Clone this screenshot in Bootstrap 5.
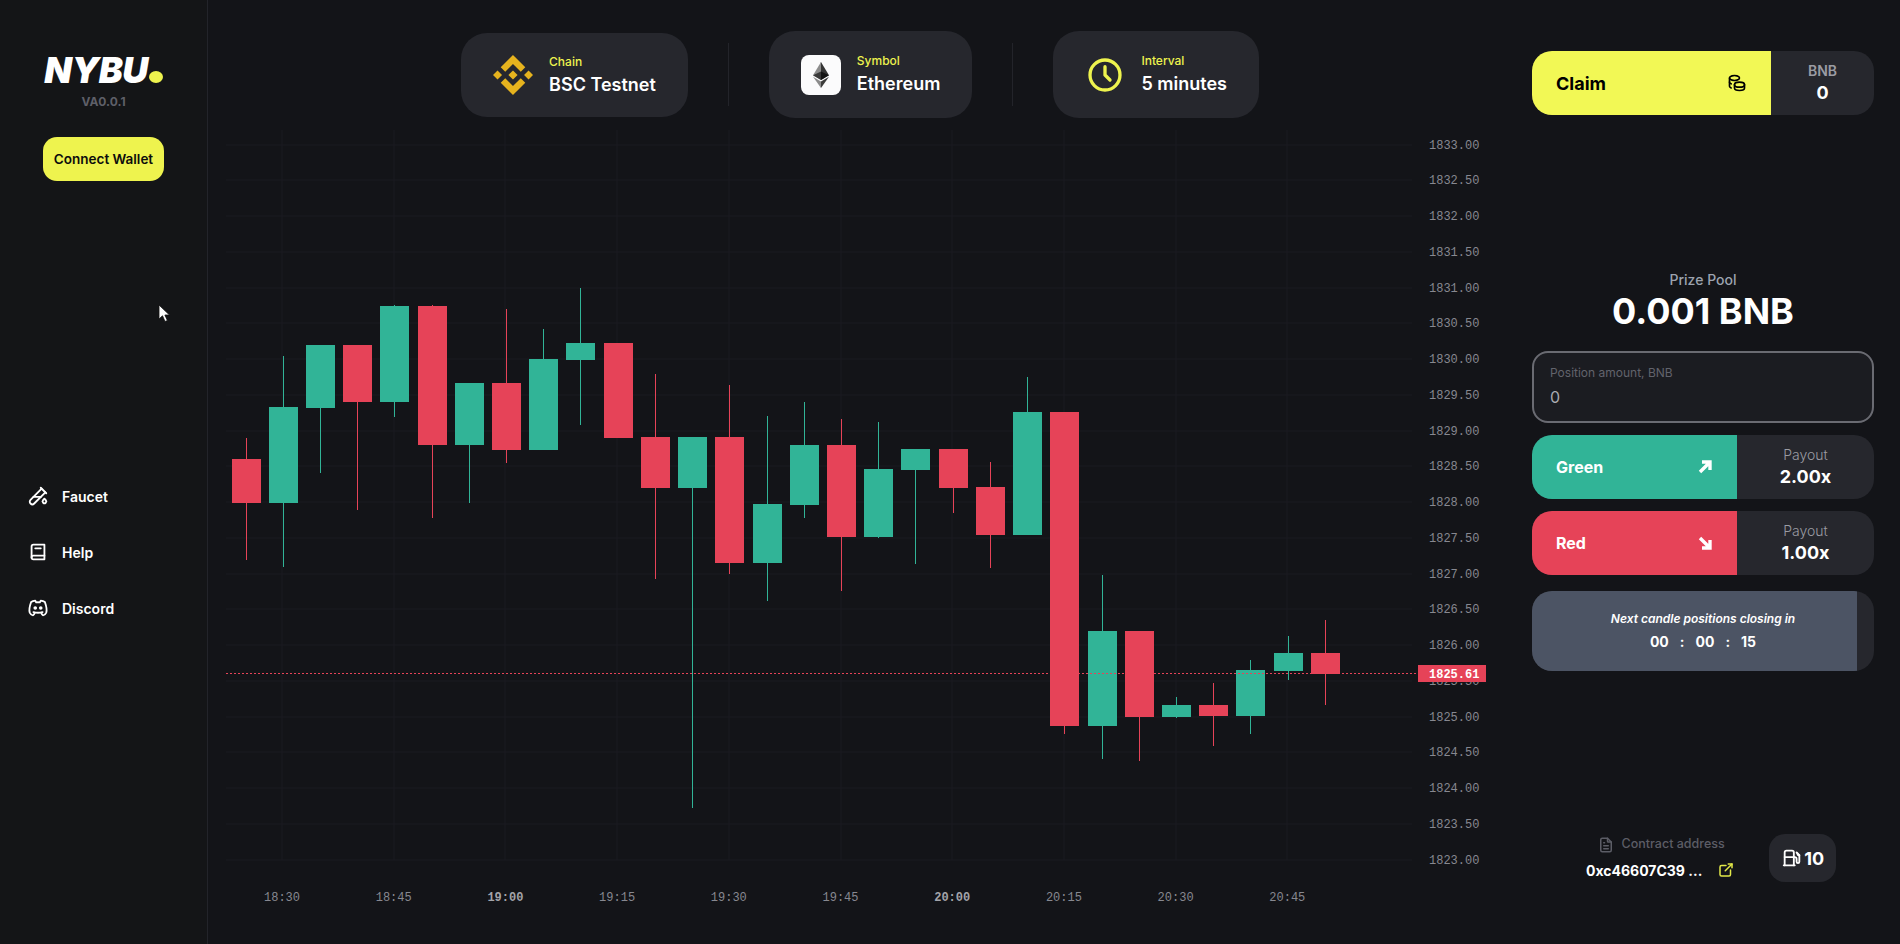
<!DOCTYPE html>
<html lang="en">
<head>
  <meta charset="UTF-8" />
  <meta name="viewport" content="width=device-width, initial-scale=1" />
  <title>NYBU</title>
  <link href="https://cdn.jsdelivr.net/npm/bootstrap@5.3.3/dist/css/bootstrap.min.css" rel="stylesheet" />
  <style>
    html, body { height: 100%; }
    body { background: #131418; color: #fff; font-family: Inter, "Liberation Sans", sans-serif; overflow: hidden; }
    .app-shell { height: 944px; }
    .side-col { width: 208px; border-right: 1px solid #23242a; background: #141517; }
    .logo-wrap { margin-top: 52px; line-height: 1; }
    .logo-text { font-size: 36px; font-weight: 900; font-style: italic; letter-spacing: -.5px; }
    .logo-dot { width: 14px; height: 12px; border-radius: 50%; background: #eef34e; margin-left: 1px; margin-bottom: 5px; }
    .logo-ver { font-size: 12px; font-weight: 700; color: #5e5f68; margin-top: 8px; }
    .connect-btn { width: 121px; height: 44px; margin-top: 29px; border-radius: 14px; background: #eef34e; color: #0c0c0c; font-size: 13.5px; font-weight: 600; border: 0; padding: 0; }
    .side-menu { margin-top: 304px; padding-left: 27px; gap: 34px; }
    .side-link { font-size: 14px; font-weight: 600; color: #fff; text-decoration: none; gap: 13px; height: 22px; }
    .side-link svg { width: 22px; height: 22px; }
    .main-col { width: 1304px; }
    .top-bar { height: 130px; padding-top: 31px; gap: 40px; }
    .info-pill { background: #26272d; border-radius: 26px; padding: 0 32px; height: 87px; gap: 16px; }
    .pill-short { height: 84px; margin-top: 2px; }
    .pill-rule { width: 1px; height: 63px; margin-top: 12px; background: #23242a; }
    .pill-label { font-size: 12px; font-weight: 500; color: #eef34e; line-height: 18px; }
    .pill-value { font-size: 18px; font-weight: 600; color: #fff; line-height: 27px; }
    .icon-box { width: 40px; height: 40px; }
    .eth-box { background: #fbfbfc; border-radius: 8px; }
    .chart-svg { display: block; width: 1304px; height: 814px; }
    .chart-svg text { font-family: "Liberation Mono", monospace; font-size: 12px; fill: #878890; }
    .chart-svg text.axis-bold { font-weight: 700; fill: #a3a4aa; }
    .chart-svg text.live-price { fill: #fff; font-weight: 700; }
    .right-col { width: 388px; padding: 51px 26px 0 20px; }
    .split-box { height: 64px; border-radius: 20px; background: #26272d; overflow: hidden; }
    .split-main { padding: 0 24px; font-weight: 700; }
    .claim-main { width: 239px; background: #f2f855; color: #000; font-size: 18px; }
    .claim-main svg { width: 20px; height: 20px; }
    .up-main { width: 205px; background: #31b497; color: #fff; font-size: 16px; }
    .down-main { width: 205px; background: #e64358; color: #fff; font-size: 16px; }
    .arrow-ico { width: 16px; height: 16px; margin-right: 0; }
    .split-side-label { font-size: 14px; line-height: 20px; }
    .split-side-value { font-size: 18px; font-weight: 700; line-height: 24px; }
    .pool-wrap { margin-top: 155px; }
    .pool-label { font-size: 14px; font-weight: 500; color: #9ca3af; line-height: 20px; }
    .pool-value { font-size: 36px; font-weight: 700; line-height: 40px; margin-top: 1px; }
    .amount-box { height: 72px; margin-top: 20px; margin-bottom: 12px; border: 2px solid #6a6b72; border-radius: 16px; background: #1b1c21; padding: 12px 16px; }
    .amount-label { font-size: 12px; color: #62636c; line-height: 16px; }
    .amount-input { background: transparent; border: 0; outline: 0; padding: 0; width: 100%; color: #a9aab0; font-size: 16px; line-height: 24px; margin-top: 4px; font-family: inherit; }
    .timer-box { height: 80px; border-radius: 20px; background: #26272d; overflow: hidden; margin-top: 16px; position: relative; }
    .timer-fill { position: absolute; top: 0; bottom: 0; left: 0; background: #4c5464; }
    .timer-text { position: relative; }
    .timer-title { font-size: 12px; font-weight: 600; font-style: italic; line-height: 18px; }
    .timer-digits { font-size: 14px; font-weight: 700; gap: 11px; line-height: 22px; margin-top: 3px; }
    .foot-row { margin-top: 163px; padding-left: 54px; }
    .addr-label { font-size: 12.5px; font-weight: 500; color: #5c5d66; gap: 7px; }
    .addr-label svg { width: 18px; height: 18px; }
    .addr-value { font-size: 14px; font-weight: 700; margin-top: 6px; gap: 15px; }
    .addr-value svg { width: 18px; height: 18px; color: #e3e948; }
    .gas-box { width: 67px; height: 48px; margin-left: 34px; border-radius: 16px; background: #26272d; font-size: 18px; font-weight: 700; gap: 1px; }
    .gas-box svg { width: 22px; height: 22px; }
    .mouse-pointer { position: absolute; left: 158px; top: 304px; width: 13px; height: 19px; }
    .ico-line { fill: none; stroke: currentColor; stroke-width: 2; stroke-linecap: round; stroke-linejoin: round; }
  </style>
</head>
<body>
  <div class="app-shell d-flex position-relative">

    <aside class="side-col d-flex flex-column flex-shrink-0">
      <div class="logo-wrap d-flex flex-column align-items-center">
        <div class="d-flex align-items-end">
          <span class="logo-text">NYBU</span><span class="logo-dot"></span>
        </div>
        <div class="logo-ver">VA0.0.1</div>
      </div>
      <div class="d-flex justify-content-center">
        <button class="connect-btn" type="button">Connect Wallet</button>
      </div>
      <nav class="side-menu d-flex flex-column">
        <a href="#" class="side-link d-flex align-items-center">
          <svg viewBox="0 0 24 24" class="ico-line"><path d="M20 8.04l-12.122 12.124a2.857 2.857 0 1 1 -4.041 -4.04l12.122 -12.124"/><path d="M7 13h8"/><path d="M19 15l1.5 1.6a2 2 0 1 1 -3 0l1.5 -1.6z"/><path d="M15 3l6 6"/></svg>
          Faucet
        </a>
        <a href="#" class="side-link d-flex align-items-center">
          <svg viewBox="0 0 24 24" class="ico-line"><path d="M19 4v16h-12a2 2 0 0 1 -2 -2v-12a2 2 0 0 1 2 -2h12z"/><path d="M19 16h-12a2 2 0 0 0 -2 2"/><path d="M9 8h6"/></svg>
          Help
        </a>
        <a href="#" class="side-link d-flex align-items-center">
          <svg viewBox="0 0 24 24" class="ico-line"><path d="M8 12a1 1 0 1 0 2 0a1 1 0 0 0 -2 0"/><path d="M14 12a1 1 0 1 0 2 0a1 1 0 0 0 -2 0"/><path d="M15.5 17c0 1 1.5 3 2 3c1.5 0 2.833 -1.667 3.5 -3c.667 -1.667 .5 -5.833 -1.5 -11.5c-1.457 -1.015 -3 -1.34 -4.5 -1.5l-.972 1.923a11.913 11.913 0 0 0 -4.053 0l-.975 -1.923c-1.5 .16 -3.043 .485 -4.5 1.5c-2 5.667 -2.167 9.833 -1.5 11.5c.667 1.333 2 3 3.5 3c.5 0 2 -2 2 -3"/><path d="M7 16.5c3.5 1 6.5 1 10 0"/></svg>
          Discord
        </a>
      </nav>
    </aside>

    <main class="main-col flex-shrink-0">
      <div class="top-bar d-flex justify-content-center align-items-start">
        <div class="info-pill pill-short d-flex align-items-center">
          <svg class="icon-box" viewBox="0 0 126.61 126.61"><path fill="#e6b31e" d="M38.73 53.2 63.3 28.63 87.89 53.22 102.19 38.92 63.3 0 24.43 38.9zM0 63.31l14.3-14.3 14.3 14.3-14.3 14.3zM38.73 73.41 63.3 97.99 87.89 73.4l14.3 14.29-38.89 38.92L24.42 87.71zM98.27 63.31l14.3-14.3 14.3 14.3-14.3 14.3zM77.83 63.3 63.3 48.76 52.55 59.51l-1.24 1.24-2.54 2.55L63.3 77.85 77.83 63.3z"/></svg>
          <div>
            <div class="pill-label">Chain</div>
            <div class="pill-value">BSC Testnet</div>
          </div>
        </div>
        <div class="pill-rule"></div>
        <div class="info-pill d-flex align-items-center">
          <div class="icon-box eth-box d-flex align-items-center justify-content-center">
            <svg width="16" height="26" viewBox="0 0 256 417"><polygon fill="#343434" points="127.96,0 125.16,9.5 125.16,285.17 127.96,287.96 255.92,212.32"/><polygon fill="#8c8c8c" points="127.96,0 0,212.32 127.96,287.96 127.96,154.16"/><polygon fill="#3c3c3b" points="127.96,312.19 126.38,314.11 126.38,412.3 127.96,416.9 256,236.59"/><polygon fill="#8c8c8c" points="127.96,416.9 127.96,312.19 0,236.59"/><polygon fill="#141414" points="127.96,287.96 255.92,212.32 127.96,154.16"/><polygon fill="#393939" points="0,212.32 127.96,287.96 127.96,154.16"/></svg>
          </div>
          <div>
            <div class="pill-label">Symbol</div>
            <div class="pill-value">Ethereum</div>
          </div>
        </div>
        <div class="pill-rule"></div>
        <div class="info-pill d-flex align-items-center">
          <svg class="icon-box ico-line" viewBox="0 0 24 24" style="color:#eef34e"><path d="M3 12a9 9 0 1 0 18 0a9 9 0 0 0 -18 0"/><path d="M12 7v5l3 3"/></svg>
          <div>
            <div class="pill-label">Interval</div>
            <div class="pill-value">5 minutes</div>
          </div>
        </div>
      </div>
      <svg id="chart" class="chart-svg" viewBox="208 130 1304 814"></svg>
    </main>

    <section class="right-col flex-shrink-0">
      <div class="split-box d-flex">
        <div class="split-main claim-main d-flex align-items-center justify-content-between">
          Claim
          <svg viewBox="0 0 24 24" class="ico-line"><path d="M9 14c0 1.657 2.686 3 6 3s6 -1.343 6 -3s-2.686 -3 -6 -3s-6 1.343 -6 3z"/><path d="M9 14v4c0 1.656 2.686 3 6 3s6 -1.344 6 -3v-4"/><path d="M3 6c0 1.072 1.144 2.062 3 2.598s4.144 .536 6 0c1.856 -.536 3 -1.526 3 -2.598c0 -1.072 -1.144 -2.062 -3 -2.598s-4.144 -.536 -6 0c-1.856 .536 -3 1.526 -3 2.598z"/><path d="M3 6v10c0 .888 .772 1.45 2 2"/><path d="M3 11c0 .888 .772 1.45 2 2"/></svg>
        </div>
        <div class="flex-grow-1 d-flex flex-column align-items-center justify-content-center">
          <div class="split-side-label fw-semibold" style="color:#9b9ca3">BNB</div>
          <div class="split-side-value">0</div>
        </div>
      </div>

      <div class="pool-wrap text-center">
        <div class="pool-label">Prize Pool</div>
        <div class="pool-value">0.001 BNB</div>
      </div>

      <div class="amount-box">
        <div class="amount-label">Position amount, BNB</div>
        <input class="amount-input" type="text" value="0" />
      </div>

      <div class="split-box d-flex">
        <div class="split-main up-main d-flex align-items-center justify-content-between">
          Green
          <svg class="arrow-ico" viewBox="0 0 16 16"><path d="M3 13 12 4M5 3h8v8" fill="none" stroke="#fff" stroke-width="3.4"/></svg>
        </div>
        <div class="flex-grow-1 d-flex flex-column align-items-center justify-content-center">
          <div class="split-side-label fw-light" style="color:#9b9ca3">Payout</div>
          <div class="split-side-value">2.00x</div>
        </div>
      </div>

      <div class="split-box d-flex mt-3 pt-0" style="margin-top:12px !important">
        <div class="split-main down-main d-flex align-items-center justify-content-between">
          Red
          <svg class="arrow-ico" viewBox="0 0 16 16"><path d="M3 3 12 12M5 13h8V5" fill="none" stroke="#fff" stroke-width="3.4"/></svg>
        </div>
        <div class="flex-grow-1 d-flex flex-column align-items-center justify-content-center">
          <div class="split-side-label fw-light" style="color:#9b9ca3">Payout</div>
          <div class="split-side-value">1.00x</div>
        </div>
      </div>

      <div class="timer-box d-flex align-items-center justify-content-center">
        <div class="timer-fill" style="width:95%"></div>
        <div class="timer-text text-center">
          <div class="timer-title">Next candle positions closing in</div>
          <div class="timer-digits d-flex justify-content-center">
            <span>00</span><span>:</span><span>00</span><span>:</span><span>15</span>
          </div>
        </div>
      </div>

      <div class="foot-row d-flex align-items-center">
        <div>
          <div class="addr-label d-flex align-items-center justify-content-center">
            <svg viewBox="0 0 24 24" class="ico-line"><path d="M14 3v4a1 1 0 0 0 1 1h4"/><path d="M17 21h-10a2 2 0 0 1 -2 -2v-14a2 2 0 0 1 2 -2h7l5 5v11a2 2 0 0 1 -2 2z"/><path d="M9 9l1 0"/><path d="M9 13l6 0"/><path d="M9 17l6 0"/></svg>
            Contract address
          </div>
          <div class="addr-value d-flex align-items-center">
            0xc46607C39 ...
            <svg viewBox="0 0 24 24" class="ico-line"><path d="M12 6h-6a2 2 0 0 0 -2 2v10a2 2 0 0 0 2 2h10a2 2 0 0 0 2 -2v-6"/><path d="M11 13l9 -9"/><path d="M15 4h5v5"/></svg>
          </div>
        </div>
        <div class="gas-box d-flex align-items-center justify-content-center">
          <svg viewBox="0 0 24 24" class="ico-line"><path d="M14 11h1a2 2 0 0 1 2 2v3a1.5 1.5 0 0 0 3 0v-7l-3 -3"/><path d="M4 20v-14a2 2 0 0 1 2 -2h6a2 2 0 0 1 2 2v14"/><path d="M3 20l12 0"/><path d="M18 7v1a1 1 0 0 0 1 1h1"/><path d="M4 11l10 0"/></svg>
          10
        </div>
      </div>
    </section>

    <svg class="mouse-pointer" viewBox="0 0 13 19"><path d="M1 1v14l3.5-3.2L7 17.5l2.4-1-2.5-5.5H11.5z" fill="#fff" stroke="#111" stroke-width=".8"/></svg>
  </div>

  <script src="https://cdn.jsdelivr.net/npm/bootstrap@5.3.3/dist/js/bootstrap.bundle.min.js"></script>
  <script>
    // [wick top, wick bottom, body top, body bottom, colour] in page pixels
    const candles = [
      [438,560,459,503,"r"],[356,567,407,503,"g"],[345,473,345,408,"g"],[345,510,345,402,"r"],
      [305,417,306,402,"g"],[305,518,306,445,"r"],[383,503,383,445,"g"],[309,463,383,450,"r"],
      [329,450,359,450,"g"],[288,425,343,360,"g"],[343,438,343,438,"r"],[374,579,437,488,"r"],
      [437,808,437,488,"g"],[385,574,437,563,"r"],[416,601,504,563,"g"],[402,518,445,505,"g"],
      [419,591,445,537,"r"],[422,538,469,537,"g"],[449,564,449,470,"g"],[449,513,449,488,"r"],
      [462,568,487,535,"r"],[377,535,412,535,"g"],[412,734,412,726,"r"],[575,759,631,726,"g"],
      [631,761,631,717,"r"],[697,718,705,717,"g"],[683,746,705,716,"r"],[660,734,670,716,"g"],
      [636,680,653,671,"g"],[620,705,653,674,"r"]
    ];
    const green = "#31b497", red = "#e64358";
    let html = "";

    // grid
    for (let i = 0; i <= 20; i++) {
      const y = Math.round(144.5 + i * 35.75);
      html += `<line x1="226" x2="1412" y1="${y}" y2="${y}" stroke="#1a1b20" />`;
    }
    for (let i = 0; i < 10; i++) {
      const x = Math.round(282 + i * 111.7);
      html += `<line x1="${x}" x2="${x}" y1="130" y2="860" stroke="#1a1b20" />`;
    }

    // candles
    candles.forEach((c, i) => {
      const x = 245.5 + i * 37.22;
      const col = c[4] === "g" ? green : red;
      html += `<rect x="${Math.round(x)}" y="${c[0]}" width="1" height="${c[1] - c[0]}" fill="${col}" />`;
      html += `<rect x="${Math.round(x - 14)}" y="${c[2]}" width="29" height="${c[3] - c[2]}" fill="${col}" />`;
    });

    // price axis
    for (let i = 0; i <= 20; i++) {
      const y = 144.5 + i * 35.75;
      const price = (1833 - i * 0.5).toFixed(2);
      html += `<text x="1429" y="${y + 4}">${price}</text>`;
    }

    // time axis
    const times = ["18:30","18:45","19:00","19:15","19:30","19:45","20:00","20:15","20:30","20:45"];
    times.forEach((t, i) => {
      const bold = t === "19:00" || t === "20:00" ? "axis-bold" : "";
      html += `<text class="${bold}" text-anchor="middle" x="${282 + i * 111.7}" y="901">${t}</text>`;
    });

    // last price
    html += `<line x1="226" x2="1418" y1="673.5" y2="673.5" stroke="${red}" stroke-dasharray="2 2" />`;
    html += `<rect x="1418" y="665" width="68" height="17" fill="${red}" />`;
    html += `<text class="live-price" x="1429" y="678">1825.61</text>`;

    document.getElementById("chart").innerHTML = html;
  </script>
</body>
</html>
